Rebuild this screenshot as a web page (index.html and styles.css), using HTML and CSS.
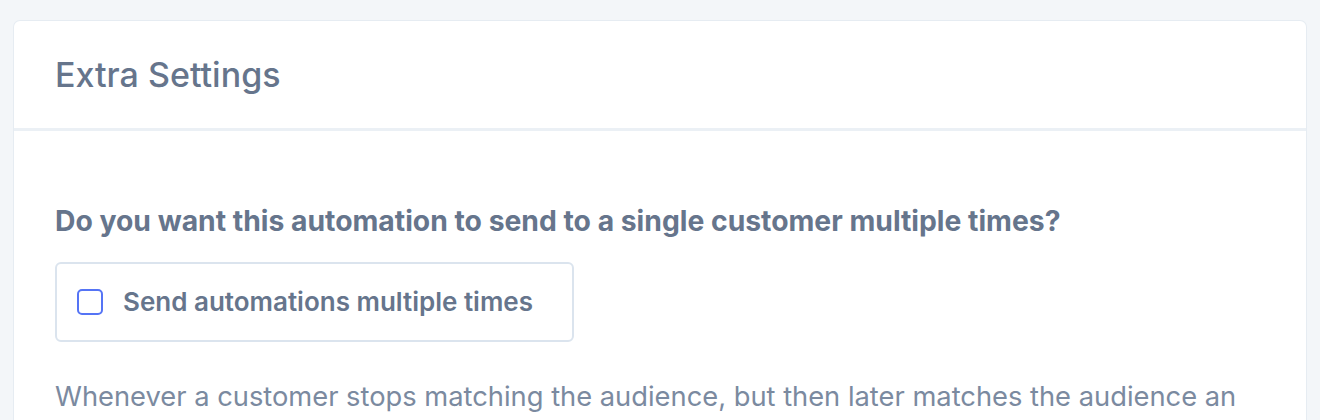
FILE: index.html
```html
<!DOCTYPE html>
<html lang="en">
<head>
<meta charset="utf-8">
<title>Extra Settings</title>
<link rel="stylesheet" href="styles.css">
</head>
<body>
  <section class="card">
    <header class="card-header">
      <h2 class="card-title">Extra Settings</h2>
    </header>
    <div class="card-body">
      <p class="question">Do you want this automation to send to a single customer multiple times?</p>
      <label class="option">
        <span class="checkbox"></span>
        <span class="option-label">Send automations multiple times</span>
      </label>
      <p class="help">Whenever a customer stops matching the audience, but then later matches the audience an additional time, they will receive this automation again.</p>
    </div>
  </section>
</body>
</html>
```
FILE: styles.css
```css
* { box-sizing: border-box; }
html, body { margin: 0; }
body {
  background: #f3f6f9;
  padding: 21px 14px;
  font-family: Inter, "Noto Sans", sans-serif;
  color: #66758c;
  overflow: hidden;
}
.card {
  background: #fff;
  border-radius: 6px;
  box-shadow: 0 0 0 1px #e6ecf2, 0 1px 2px rgba(0,0,0,0.03);
}
.card-header {
  height: 110px;
  display: flex;
  align-items: center;
  padding: 0 41px;
  border-bottom: 3px solid #ebf0f5;
}
.card-title {
  margin: 0;
  font-size: 34px;
  font-weight: 500;
  line-height: 1.21;
  color: #66758c;
}
.card-body {
  padding: 74px 41px 40px;
}
.question {
  margin: 0 0 23px;
  font-size: 28.3px;
  font-weight: 700;
  line-height: 1.2;
  color: #66758c;
}
.option {
  display: flex;
  align-items: center;
  gap: 20px;
  width: 519px;
  height: 80px;
  padding: 0 20px;
  border: 2px solid #dbe4ee;
  border-radius: 6px;
}
.checkbox {
  width: 26px;
  height: 26px;
  border: 2px solid #5574f5;
  border-radius: 5px;
  flex: none;
}
.option-label {
  font-size: 26px;
  font-weight: 600;
  color: #66758c;
}
.help {
  margin: 35px 0 0;
  font-size: 27.3px;
  line-height: 1.5;
  color: #7b8aa0;
}
```
